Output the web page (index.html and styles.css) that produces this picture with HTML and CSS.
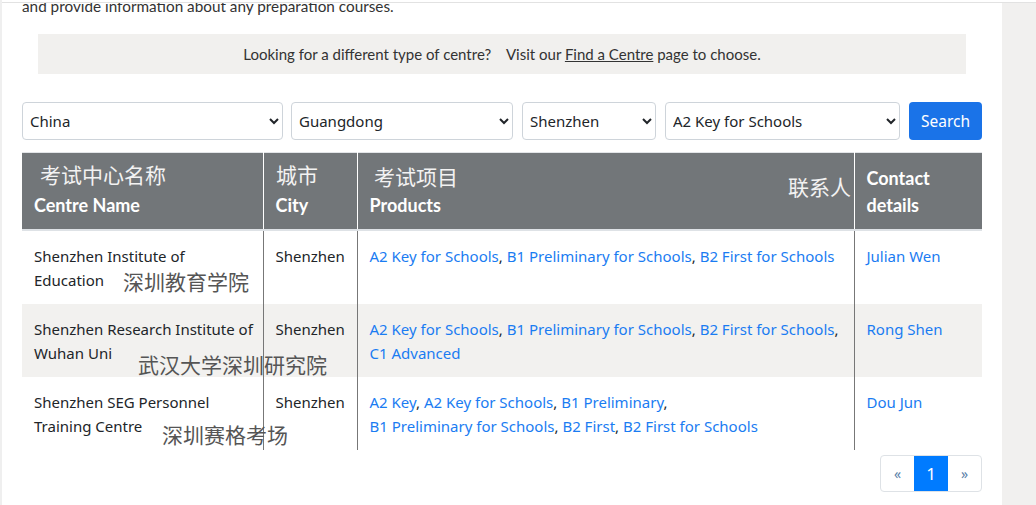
FILE: index.html
```html
<!DOCTYPE html>
<html lang="en">
<head>
<meta charset="utf-8">
<title>Find a centre</title>
<link rel="stylesheet" href="styles.css">
</head>
<body>
<div class="frame">
  <div class="main">
    <div class="topline"></div>
    <div class="viewport">
      <p class="intro">and provide information about any preparation courses.</p>
      <div class="notice"><span>Looking for a different type of centre?&nbsp;&nbsp;&nbsp; Visit our <a href="#">Find a Centre</a> page to choose.</span></div>
      <form class="filters">
        <select class="sel sel-country"><option>China</option></select>
        <select class="sel sel-province"><option>Guangdong</option></select>
        <select class="sel sel-city"><option>Shenzhen</option></select>
        <select class="sel sel-product"><option>A2 Key for Schools</option></select>
        <button type="button" class="btn-search">Search</button>
      </form>
      <div class="table-wrap">
        <table class="centres">
          <colgroup>
            <col class="c1"><col class="c2"><col class="c3"><col class="c4">
          </colgroup>
          <thead>
            <tr>
              <th>Centre Name</th>
              <th>City</th>
              <th>Products</th>
              <th>Contact details</th>
            </tr>
          </thead>
          <tbody>
            <tr class="r1">
              <td>Shenzhen Institute of Education</td>
              <td>Shenzhen</td>
              <td><a href="#">A2 Key for Schools</a>, <a href="#">B1 Preliminary for Schools</a>, <a href="#">B2 First for Schools</a></td>
              <td><a href="#">Julian Wen</a></td>
            </tr>
            <tr class="r2 alt">
              <td>Shenzhen Research Institute of Wuhan Uni</td>
              <td>Shenzhen</td>
              <td><a href="#">A2 Key for Schools</a>, <a href="#">B1 Preliminary for Schools</a>, <a href="#">B2 First for Schools</a>, <a href="#">C1 Advanced</a></td>
              <td><a href="#">Rong Shen</a></td>
            </tr>
            <tr class="r3">
              <td>Shenzhen SEG Personnel Training Centre</td>
              <td>Shenzhen</td>
              <td><a href="#">A2 Key</a>, <a href="#">A2 Key for Schools</a>, <a href="#">B1 Preliminary</a>,<br><a href="#">B1 Preliminary for Schools</a>, <a href="#">B2 First</a>, <a href="#">B2 First for Schools</a></td>
              <td><a href="#">Dou Jun</a></td>
            </tr>
          </tbody>
        </table>
        <span class="note note-h n1">考试中心名称</span>
        <span class="note note-h n2">城市</span>
        <span class="note note-h n3">考试项目</span>
        <span class="note note-h n4">联系人</span>
        <span class="note note-b n5">深圳教育学院</span>
        <span class="note note-b n6">武汉大学深圳研究院</span>
        <span class="note note-b n7">深圳赛格考场</span>
      </div>
      <nav class="pager-row">
        <ul class="pager">
          <li class="pg"><a href="#">&laquo;</a></li>
          <li class="pg active"><a href="#">1</a></li>
          <li class="pg"><a href="#">&raquo;</a></li>
        </ul>
      </nav>
    </div>
  </div>
  <div class="side"></div>
</div>
</body>
</html>
```

FILE: styles.css
```css
* { box-sizing: border-box; }
html, body { margin: 0; padding: 0; background: #fff; }
body {
  font-family: "Noto Sans", "Open Sans", sans-serif;
  color: #212529;
  overflow: hidden;
}
.frame {
  display: flex;
  width: 1036px;
  height: 505px;
}
.main {
  width: 1002px;
  border-left: 2px solid #efefef;
  display: flex;
  flex-direction: column;
  overflow: hidden;
}
.side {
  width: 34px;
  background: #f1f0ef;
  border-top: 1px solid #e2e2e2;
  margin-top: 2px;
}
.topline {
  height: 3px;
  border-bottom: 1px solid #e2e2e2;
  flex: none;
}
.viewport {
  flex: 1;
  overflow: hidden;
  padding: 0 20px;
}
.intro {
  font-family: "Source Sans Pro", "Lato", sans-serif;
  font-size: 15.3px;
  line-height: 20px;
  color: #333;
  margin: -7px 0 0 0;
}
.notice {
  margin: 18px 16px 0 16px;
  height: 40px;
  background: #f1f0ee;
  font-family: "Lato", sans-serif;
  font-size: 15px;
  color: #333;
  display: flex;
  align-items: center;
  justify-content: center;
}
.notice a { color: #333; text-decoration: underline; }
.filters {
  margin-top: 28px;
  display: flex;
  gap: 9px;
  height: 38px;
}
.sel {
  height: 38px;
  border: 1px solid #ced4da;
  border-radius: 4px;
  background: #fff;
  font-family: inherit;
  font-size: 15px;
  color: #212529;
  padding: 0 3px;
}
.sel-country { width: 261px; margin-right: -1px; }
.sel-province { width: 222px; }
.sel-city { width: 134px; }
.sel-product { width: 235px; }
.btn-search {
  width: 73px;
  height: 38px;
  border: 0;
  border-radius: 4px;
  background: #1a73e8;
  color: #fff;
  font-family: inherit;
  font-size: 15.5px;
  padding: 0;
}
.table-wrap {
  position: relative;
  margin-top: 12px;
  width: 960px;
}
.centres {
  width: 960px;
  border-collapse: collapse;
  table-layout: fixed;
  border-top: 1px solid #e3e5e8;
}
.c1 { width: 241px; }
.c2 { width: 94px; }
.c3 { width: 497px; }
.c4 { width: 128px; }
.centres th {
  background: #727679;
  color: #fff;
  font-family: "Lato", sans-serif;
  font-weight: 700;
  font-size: 18px;
  line-height: 27px;
  text-align: left;
  vertical-align: bottom;
  height: 77px;
  padding: 0 12px 10px 12px;
  border-left: 1px solid #fff;
  border-bottom: 2px solid #dee2e6;
}
.centres th:first-child { border-left: 0; }
.centres td {
  font-size: 15px;
  line-height: 24px;
  vertical-align: top;
  padding: 13px 12px 12px 12px;
  border-left: 1px solid #777;
}
.centres td:first-child { border-left: 0; padding-right: 4px; }
.r1 td { height: 74px; }
.r2 td { height: 72px; }
.r3 td { height: 73px; }
.centres tr.alt td { background: #f2f1ef; }
.centres a { color: #1a7cf2; text-decoration: none; }
.note {
  position: absolute;
  font-family: "Noto Sans CJK SC", sans-serif;
  font-size: 21px;
  line-height: 1;
  white-space: nowrap;
}
.note-h { color: #f2f2f2; }
.note-b { color: #555; }
.n1 { left: 18px; top: 12px; }
.n2 { left: 254px; top: 12px; }
.n3 { left: 352px; top: 14px; }
.n4 { left: 766px; top: 24px; }
.n5 { left: 101px; top: 119px; }
.n6 { left: 116px; top: 202px; }
.n7 { left: 140px; top: 272px; }
.pager-row {
  width: 960px;
  display: flex;
  justify-content: flex-end;
  margin-top: 5px;
}
.pager {
  list-style: none;
  margin: 0;
  padding: 0;
  display: flex;
  border: 1px solid #dee2e6;
  border-radius: 4px;
  overflow: hidden;
  height: 37px;
}
.pg a {
  display: flex;
  align-items: center;
  justify-content: center;
  width: 33px;
  height: 35px;
  color: #5a7fa8;
  font-size: 14px;
  text-decoration: none;
}
.pg.active a {
  background: #007bff;
  color: #fff;
  font-size: 17px;
  width: 34px;
}
```
